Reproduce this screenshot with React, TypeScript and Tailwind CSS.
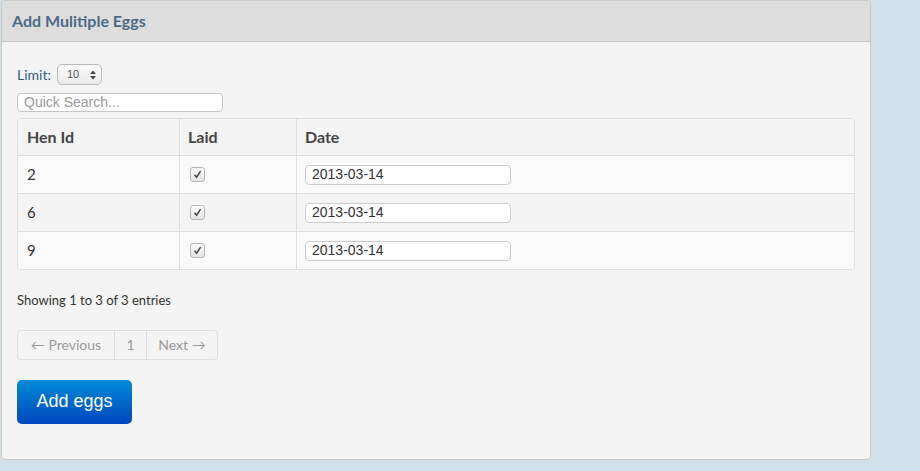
import React from "react";

const rows = ["2", "6", "9"];

function Check() {
  return (
    <span className="inline-flex h-[15px] w-[15px] items-center justify-center rounded-[3px] border border-[#b5b5b5] bg-gradient-to-b from-[#fdfdfd] to-[#e4e4e4]">
      <svg width="9" height="9" viewBox="0 0 9 9">
        <path d="M1.5 4.8 L3.6 7.2 L7.6 1.2" fill="none" stroke="#444" strokeWidth="1.5" />
      </svg>
    </span>
  );
}

export default function App() {
  return (
    <div className="h-[471px] w-[920px] bg-[#d1e1ea] pl-px" style={{ fontFamily: "Lato, 'Noto Sans', sans-serif" }}>
      <div className="h-[460px] w-[870px] overflow-hidden rounded-[4px] border border-[#c9c9c9] bg-[#f4f4f4]">
        <div className="flex h-[41px] items-center border-b border-[#c8c8c8] bg-[#dddddd] pl-[10px]">
          <span className="text-[16px] font-bold text-[#4b6a88]">Add Mulitiple Eggs</span>
        </div>
        <div className="px-[15px] pt-[22px]">
          <div className="flex items-center gap-[6px] text-[14px] text-[#2d5b85]">
            <span>Limit:</span>
            <span className="flex h-[21px] w-[45px] items-center justify-between rounded-[5px] border border-[#b9b9b9] bg-gradient-to-b from-[#fcfcfc] to-[#e9e9e9] pl-[9px] pr-[5px] text-[11px] text-[#555]" style={{ fontFamily: "'Liberation Sans', Arial, sans-serif" }}>
              10
              <svg width="6" height="10" viewBox="0 0 6 10">
                <path d="M0 4 L3 0.5 L6 4 Z M0 6 L3 9.5 L6 6 Z" fill="#444" />
              </svg>
            </span>
          </div>
          <div className="mt-[8px] flex h-[19px] w-[206px] items-center rounded-[4px] border border-[#c6c6c6] bg-white pl-[6px] text-[14px] text-[#999]" style={{ fontFamily: "'Liberation Sans', Arial, sans-serif" }}>
            Quick Search...
          </div>
          <div className="mt-[6px] w-[838px] overflow-hidden rounded-[4px] border border-[#dddddd]">
            <div className="flex h-[36px] items-center bg-[#f4f4f4] text-[16px] font-bold text-[#444]">
              <div className="flex h-full w-[161px] items-center pl-[9px]">Hen Id</div>
              <div className="flex h-full w-[117px] items-center border-l border-[#dddddd] pl-[8px]">Laid</div>
              <div className="flex h-full flex-1 items-center border-l border-[#dddddd] pl-[8px]">Date</div>
            </div>
            {rows.map((r, i) => (
              <div key={r} className={`flex h-[38px] items-center border-t border-[#dddddd] text-[15px] text-[#333] ${i % 2 === 0 ? "bg-[#fafafa]" : "bg-[#f4f4f4]"}`}>
                <div className="flex h-full w-[161px] items-center pl-[9px]">{r}</div>
                <div className="flex h-full w-[117px] items-center border-l border-[#dddddd] pl-[10px]"><Check /></div>
                <div className="flex h-full flex-1 items-center border-l border-[#dddddd] pl-[8px]">
                  <div className="flex h-[20px] w-[206px] items-center rounded-[4px] border border-[#cccccc] bg-white pl-[6px] text-[14px] text-[#333]" style={{ fontFamily: "'Liberation Sans', Arial, sans-serif" }}>
                    2013-03-14
                  </div>
                </div>
              </div>
            ))}
          </div>
          <div className="mt-[21px] text-[13px] text-[#333]">Showing 1 to 3 of 3 entries</div>
          <div className="mt-[19px] flex h-[30px] w-[201px] overflow-hidden rounded-[4px] border border-[#dddddd] text-[14px] text-[#999]">
            <div className="flex w-[96px] items-center justify-center">← Previous</div>
            <div className="flex w-[32px] items-center justify-center border-l border-[#dddddd]">1</div>
            <div className="flex flex-1 items-center justify-center border-l border-[#dddddd]">Next →</div>
          </div>
          <button className="mt-[20px] flex h-[44px] w-[115px] items-center justify-center rounded-[5px] bg-gradient-to-b from-[#0a8bd8] to-[#0044bb] text-[18px] text-white" style={{ fontFamily: "'Liberation Sans', Arial, sans-serif" }}>
            Add eggs
          </button>
        </div>
      </div>
    </div>
  );
}
